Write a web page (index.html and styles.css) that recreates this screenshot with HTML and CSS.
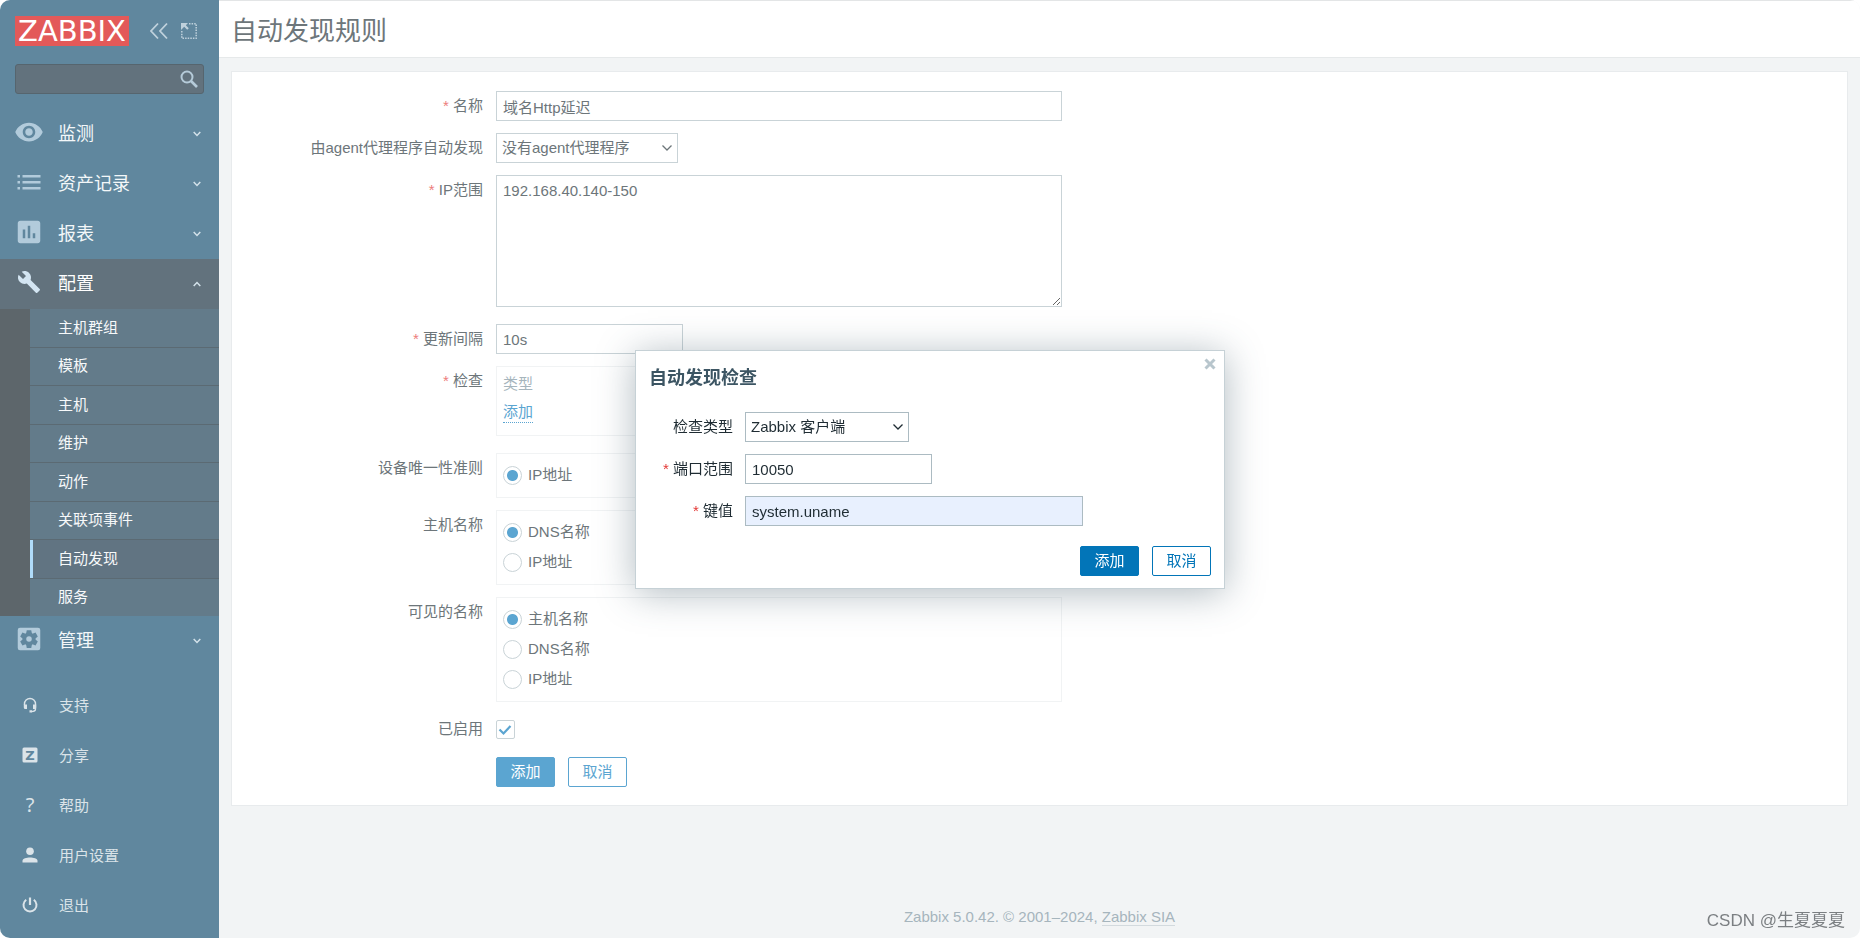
FILE: index.html
```html
<!DOCTYPE html>
<html lang="zh-CN">
<head>
<meta charset="utf-8">
<title>自动发现规则</title>
<link rel="stylesheet" href="styles.css">
</head>
<body>
<div class="shell">
  <aside class="sidebar">
    <div class="brand">
      <a class="logo" href="#">ZABBIX</a>
      <button class="icon-button" type="button" aria-label="收起侧边栏">
        <svg width="20" height="18" viewBox="0 0 20 18" fill="none" stroke="currentColor" stroke-width="1.800"><path d="M9 1.500L2 9l7 7.500M18 1.500L11 9l7 7.500"/></svg>
      </button>
      <button class="icon-button" type="button" aria-label="隐藏侧边栏">
        <svg width="18" height="18" viewBox="0 0 18 18" fill="currentColor"><path d="M9 1.800H16.200V16.200H1.800V9" fill="none" stroke="currentColor" stroke-width="1.500" stroke-dasharray="1.500 1.100"/><path d="M1 1h7L5.800 3.200l3 3-1.600 1.600-3-3L1 8z"/></svg>
      </button>
    </div>
    <form class="search">
      <input class="search-input" type="text" aria-label="搜索">
      <button class="search-button" type="submit" aria-label="搜索">
        <svg width="20" height="20" viewBox="0 0 20 20" fill="none" stroke="currentColor"><circle cx="8" cy="8" r="5.500" stroke-width="2"/><path d="M12 12L18 18" stroke-width="2.600"/></svg>
      </button>
    </form>
    <nav class="menu">
      <a class="menu-item" href="#">
        <svg class="menu-icon" viewBox="0 0 24 24"><path d="M12 4.500C7 4.500 2.730 7.610 1 12c1.730 4.390 6 7.500 11 7.500s9.270-3.110 11-7.500c-1.730-4.390-6-7.500-11-7.500zM12 17c-2.760 0-5-2.240-5-5s2.240-5 5-5 5 2.240 5 5-2.240 5-5 5zm0-8c-1.660 0-3 1.340-3 3s1.340 3 3 3 3-1.340 3-3-1.340-3-3-3z"/></svg>
        <span class="menu-text">监测</span>
        <svg class="chevron" viewBox="0 0 8 6"><path d="M.7 1L4 4.500 7.300 1"/></svg>
      </a>
      <a class="menu-item" href="#">
        <svg class="menu-icon" viewBox="0 0 30 30"><path d="M3.500 8h2.500v2.500H3.500zM8.500 8h18v2.500h-18zM3.500 14h2.500v2.500H3.500zM8.500 14h18v2.500h-18zM3.500 20h2.500v2.500H3.500zM8.500 20h18v2.500h-18z"/></svg>
        <span class="menu-text">资产记录</span>
        <svg class="chevron" viewBox="0 0 8 6"><path d="M.7 1L4 4.500 7.300 1"/></svg>
      </a>
      <a class="menu-item" href="#">
        <svg class="menu-icon" viewBox="0 0 24 24"><path d="M19 3H5c-1.100 0-2 .9-2 2v14c0 1.100.9 2 2 2h14c1.100 0 2-.9 2-2V5c0-1.100-.9-2-2-2zM9 17H7v-7h2v7zm4 0h-2V7h2v10zm4 0h-2v-4h2v4z"/></svg>
        <span class="menu-text">报表</span>
        <svg class="chevron" viewBox="0 0 8 6"><path d="M.7 1L4 4.500 7.300 1"/></svg>
      </a>
      <a class="menu-item menu-item-open" href="#">
        <svg class="menu-icon" viewBox="-3 -3 30 30"><path d="M22.700 19l-9.100-9.100c.9-2.300.4-5-1.500-6.900-2-2-5-2.400-7.400-1.300L9 6 6 9 1.600 4.700C.4 7.100.9 10.100 2.900 12.100c1.900 1.900 4.600 2.400 6.900 1.500l9.100 9.100c.4.4 1 .4 1.400 0l2.300-2.300c.5-.4.5-1.100.1-1.400z"/></svg>
        <span class="menu-text">配置</span>
        <svg class="chevron" viewBox="0 0 8 6"><path d="M.7 5L4 1.500 7.300 5"/></svg>
      </a>
      <div class="submenu">
        <a class="submenu-item" href="#">主机群组</a>
        <a class="submenu-item" href="#">模板</a>
        <a class="submenu-item" href="#">主机</a>
        <a class="submenu-item" href="#">维护</a>
        <a class="submenu-item" href="#">动作</a>
        <a class="submenu-item" href="#">关联项事件</a>
        <a class="submenu-item submenu-item-active" href="#">自动发现</a>
        <a class="submenu-item" href="#">服务</a>
      </div>
      <a class="menu-item" href="#">
        <svg class="menu-icon" viewBox="0 0 24 24"><rect x="3" y="3" width="18" height="18" rx="1.800"/><g class="menu-icon-cut"><circle cx="12" cy="12" r="5.200"/><path d="M10.200 4.900h3.600l.6 3.100H9.600zM10.200 19.100h3.600l.6-3.100H9.600z"/><path transform="rotate(60 12 12)" d="M10.200 4.900h3.600l.6 3.100H9.600zM10.200 19.100h3.600l.6-3.100H9.600z"/><path transform="rotate(120 12 12)" d="M10.200 4.900h3.600l.6 3.100H9.600zM10.200 19.100h3.600l.6-3.100H9.600z"/></g><circle cx="12" cy="12" r="2.200"/></svg>
        <span class="menu-text">管理</span>
        <svg class="chevron" viewBox="0 0 8 6"><path d="M.7 1L4 4.500 7.300 1"/></svg>
      </a>
    </nav>
    <nav class="menu menu-user">
      <a class="menu-item user-item" href="#">
        <svg class="user-icon" viewBox="0 0 16 16"><path d="M2.500 8V7a5.500 5.500 0 0 1 11 0v5q0 2.500-4 2.500" fill="none" stroke="currentColor" stroke-width="1.400"/><path d="M1.800 7.500H5V12H3.300Q1.800 12 1.800 10.500zM14.200 7.500H11V12h1.700q1.500 0 1.500-1.500zM7.500 13.300h2.500v2.200H7.500z"/></svg>
        <span>支持</span>
      </a>
      <a class="menu-item user-item" href="#">
        <svg class="user-icon" viewBox="0 0 16 16"><rect x=".5" y=".5" width="15" height="15" rx="1.500"/><text class="badge-letter" x="8" y="12.600" text-anchor="middle">Z</text></svg>
        <span>分享</span>
      </a>
      <a class="menu-item user-item" href="#">
        <span class="help-mark" aria-hidden="true">?</span>
        <span>帮助</span>
      </a>
      <a class="menu-item user-item" href="#">
        <svg class="user-icon" viewBox="0 0 16 16"><circle cx="8" cy="4.300" r="3.800"/><path d="M.5 15.500v-1.700C.5 11.500 4.500 10.500 8 10.500s7.500 1 7.500 3.300v1.700z"/></svg>
        <span>用户设置</span>
      </a>
      <a class="menu-item user-item" href="#">
        <svg class="user-icon" viewBox="0 0 16 16" fill="none" stroke="currentColor"><path d="M8 .5v7.500" stroke-width="2.200"/><path class="power-ring" d="M4.200 2.800a6.500 6.500 0 1 0 7.600 0" stroke-width="2"/></svg>
        <span>退出</span>
      </a>
    </nav>
  </aside>

  <div class="page">
    <header class="page-header"><h1 class="page-title">自动发现规则</h1></header>
    <main class="card">
      <form class="form">
        <label class="label required" for="name">名称</label>
        <div><input class="input wide" id="name" type="text" value="域名Http延迟"></div>

        <label class="label" for="proxy">由agent代理程序自动发现</label>
        <div><select class="select proxy" id="proxy"><option>没有agent代理程序</option></select></div>

        <label class="label required" for="iprange">IP范围</label>
        <div class="range-field"><textarea class="input wide range" id="iprange">192.168.40.140-150</textarea></div>

        <label class="label required" for="delay">更新间隔</label>
        <div><input class="input short" id="delay" type="text" value="10s"></div>

        <span class="label required" id="checks-label">检查</span>
        <div class="group wide checks" role="group" aria-labelledby="checks-label">
          <table class="checks-table">
            <thead><tr><th>类型</th></tr></thead>
            <tbody><tr><td><a class="dotted-link" href="#">添加</a></td></tr></tbody>
          </table>
        </div>

        <span class="label" id="unique-label">设备唯一性准则</span>
        <div class="group wide" role="radiogroup" aria-labelledby="unique-label">
          <label class="choice"><input class="radio" type="radio" name="unique" checked>IP地址</label>
        </div>

        <span class="label" id="host-label">主机名称</span>
        <div class="group wide" role="radiogroup" aria-labelledby="host-label">
          <label class="choice"><input class="radio" type="radio" name="host" checked>DNS名称</label>
          <label class="choice"><input class="radio" type="radio" name="host">IP地址</label>
        </div>

        <span class="label" id="visible-label">可见的名称</span>
        <div class="group wide" role="radiogroup" aria-labelledby="visible-label">
          <label class="choice"><input class="radio" type="radio" name="visible" checked>主机名称</label>
          <label class="choice"><input class="radio" type="radio" name="visible">DNS名称</label>
          <label class="choice"><input class="radio" type="radio" name="visible">IP地址</label>
        </div>

        <label class="label" for="enabled">已启用</label>
        <div class="check-field"><input class="checkbox" id="enabled" type="checkbox" checked></div>

        <div class="actions">
          <button class="button primary" type="button">添加</button>
          <button class="button" type="button">取消</button>
        </div>
      </form>
    </main>
    <footer class="footer">Zabbix 5.0.42. © 2001–2024, <a class="footer-link" href="#">Zabbix SIA</a></footer>
  </div>
</div>

<div class="dialog" role="dialog" aria-labelledby="dialog-title">
  <div class="dialog-head">
    <h2 class="dialog-title" id="dialog-title">自动发现检查</h2>
    <button class="dialog-close" type="button" aria-label="关闭">
      <svg width="12" height="12" viewBox="0 0 12 12" fill="none" stroke="currentColor" stroke-width="3"><path d="M1.500 1.500l9 9M10.500 1.500l-9 9"/></svg>
    </button>
  </div>
  <form class="dialog-form">
    <label class="label" for="check-type">检查类型</label>
    <div><select class="select check-type" id="check-type"><option>Zabbix 客户端</option></select></div>
    <label class="label required" for="ports">端口范围</label>
    <div><input class="input short" id="ports" type="text" value="10050"></div>
    <label class="label required" for="key">键值</label>
    <div><input class="input key autofilled" id="key" type="text" value="system.uname"></div>
  </form>
  <div class="dialog-actions">
    <button class="button primary" type="button">添加</button>
    <button class="button" type="button">取消</button>
  </div>
</div>
<div class="watermark">CSDN @生夏夏夏</div>
</body>
</html>
```
FILE: styles.css
```css
:root {
  --text: #6d767a;
  --border: #c9d3d7;
  --accent: #5ba5d1;
  --danger: #ed7d7b;
  --side: #60879e;
}

* { box-sizing: border-box; }

body {
  margin: 0;
  background: #fff;
  color: var(--text);
  font: 15px/20px "Liberation Sans", "Noto Sans CJK SC", sans-serif;
}

a { color: inherit; text-decoration: none; }
button, input, select, textarea { font: inherit; color: inherit; margin: 0; }
svg { display: block; flex: none; }

.shell {
  display: flex;
  min-height: 100vh;
  border-radius: 10px;
  overflow: hidden;
  background: #f2f4f5;
}

/* Sidebar */
.sidebar {
  flex: none;
  width: 219px;
  background: var(--side);
  color: #fff;
}

.brand {
  display: flex;
  align-items: center;
  gap: 11px;
  padding: 16px 0 0 15px;
}

.logo {
  width: 114px;
  margin-right: 9px;
  background: #e35959;
  font: 29px/30px "DejaVu Sans", sans-serif;
  text-align: center;
}

.icon-button, .search-button, .dialog-close {
  display: block;
  padding: 0;
  border: 0;
  background: none;
  color: #bfd1dc;
}

.search {
  display: flex;
  align-items: center;
  margin: 18px 15px 15px;
  padding-right: 4px;
  border: 1px solid #56656e;
  border-radius: 3px;
  background: #62727d;
}

.search-input {
  flex: 1;
  min-width: 0;
  height: 28px;
  border: 0;
  background: none;
  outline: none;
}

.search-button { color: #b5cbd9; }

.menu-item {
  display: flex;
  align-items: center;
  height: 50px;
  padding: 0 18px 0 14px;
  font-size: 18px;
  color: #f3f7f9;
}

.menu-icon {
  width: 30px;
  height: 30px;
  margin: 0 14px 4px 0;
  fill: #b2cbdb;
}

.menu-icon-cut { fill: var(--side); }
.menu-text { flex: 1; }

.chevron {
  width: 8px;
  height: 6px;
  fill: none;
  stroke: #d3e2ea;
  stroke-width: 1.500;
}

.menu-item-open { background: #62727d; color: #fff; }
.menu-item-open .menu-icon { fill: #d3e5f2; }

.submenu {
  display: grid;
  min-height: 307px;
  padding-left: 30px;
  background: #5d666b;
}

.submenu-item {
  display: flex;
  align-items: center;
  padding-left: 28px;
  background: #637b8a;
  color: #f7f9fa;
}

.submenu-item + .submenu-item { border-top: 1px solid #5b6a73; }

.submenu-item-active {
  padding-left: 25px;
  background: #617482;
  box-shadow: inset 3px 0 #b0dcfa;
}

.submenu-item.submenu-item-active { padding-left: 28px; }

.menu-user { margin-top: 15px; }

.user-item {
  gap: 21px;
  padding-left: 22px;
  font-size: 15px;
  color: #dbe4e9;
}

.user-icon { width: 16px; height: 16px; margin-bottom: 3px; fill: currentColor; }
.power-ring { fill: none; }
.badge-letter { font: bold 13px "DejaVu Sans", sans-serif; fill: var(--side); }

.help-mark {
  width: 16px;
  margin-bottom: 3px;
  font: 20px/28px "Noto Sans", sans-serif;
  text-align: center;
}

/* Page */
.page {
  flex: 1;
  min-width: 0;
  display: flex;
  flex-direction: column;
}

.page-header {
  padding: 11px 12px 6px;
  border-top: 1px solid #e3e5e6;
  border-bottom: 1px solid #e6e9ea;
  background: #fff;
}

.page-title {
  margin: 0;
  font-size: 26px;
  line-height: 39px;
  font-weight: 400;
}

.card {
  margin: 13px 12px 0;
  padding: 19px 12px 18px;
  border: 1px solid #e8ebed;
  background: #fff;
}

.form {
  display: grid;
  grid-template-columns: 239px 1fr;
  gap: 12px 13px;
}

.form > div, .dialog-form > div { display: flex; }

.label { text-align: right; line-height: 30px; }
.required::before { content: "* "; color: var(--danger); }

.input {
  height: 30px;
  padding: 0 6px;
  border: 1px solid var(--border);
  border-radius: 0;
  background: #fff;
}

.select {
  appearance: none;
  height: 30px;
  padding: 0 20px 0 5px;
  border: 1px solid var(--border);
  border-radius: 0;
  background: #fff url("data:image/svg+xml,%3Csvg xmlns='http://www.w3.org/2000/svg' viewBox='0 0 12 8'%3E%3Cpath d='M1.500 1.500L6 6l4.500-4.500' fill='none' stroke='%236d767a' stroke-width='1.300'/%3E%3C/svg%3E") no-repeat right 4px center / 12px 8px;
}

.wide { width: 566px; }
.short { width: 187px; }
.proxy { width: 182px; }

.range-field { margin-bottom: 5px; }
.range { height: 132px; padding: 6px; line-height: 18px; }

.form > .group {
  display: block;
  padding: 6px 6px 7px;
  border: 1px solid #f1f3f4;
}

.form > .checks { margin-bottom: 5px; padding: 3px 6px 8px; }
.checks-table { border-collapse: collapse; }
.checks-table th { padding: 3px 0; color: #a6b5bd; font-weight: 400; line-height: 22px; text-align: left; }
.checks-table td { padding: 4px 0; line-height: 22px; }
.dotted-link { display: block; line-height: 20px; color: var(--accent); border-bottom: 1px dotted var(--accent); }

.choice { display: flex; align-items: center; gap: 6px; line-height: 30px; }

.radio, .checkbox {
  appearance: none;
  flex: none;
  width: 19px;
  height: 19px;
  border: 1px solid var(--border);
  background: #fff;
}

.radio { border-radius: 50%; }
.radio:checked { background: radial-gradient(circle, var(--accent) 5px, #fff 6px); }

.checkbox { border-radius: 2px; }

.checkbox:checked {
  background: #fff url("data:image/svg+xml,%3Csvg xmlns='http://www.w3.org/2000/svg' viewBox='0 0 17 17'%3E%3Cpath d='M2.500 8.500l4 4 7-7.500' fill='none' stroke='%235ba5d1' stroke-width='2.200'/%3E%3C/svg%3E") center / 17px;
}

.form > .check-field { align-items: center; height: 30px; margin-bottom: 1px; }

.form > .actions { grid-column: 2; gap: 13px; }

.button {
  width: 59px;
  height: 30px;
  padding: 0;
  border: 1px solid var(--accent);
  border-radius: 2px;
  background: #fff;
  color: var(--accent);
}

.button.primary { background: var(--accent); color: #fff; }

.footer {
  margin-top: auto;
  padding-bottom: 11px;
  text-align: center;
  color: #a6b5bd;
}

.footer-link { border-bottom: 1px solid #d3dade; }

/* Dialog */
.dialog {
  --text: #1f2c33;
  --border: #acbbc2;
  --accent: #0275b8;
  --danger: #e33734;
  position: fixed;
  top: 350px;
  left: calc(50% - 295px);
  width: 590px;
  padding: 7px 13px 12px;
  border: 1px solid #c6d1d6;
  background: #fff;
  color: var(--text);
  box-shadow: 0 4px 36px rgba(60, 85, 99, 0.4);
}

.dialog-head { display: flex; justify-content: space-between; }

.dialog-title {
  margin: 7px 0 0;
  font-size: 18px;
  line-height: 26px;
  color: #3c5563;
}

.dialog-close { align-self: flex-start; margin-right: -5px; color: #b8c6cd; }

.dialog-form {
  display: grid;
  grid-template-columns: 84px 1fr;
  gap: 12px;
  margin: 21px 0 20px;
}

.check-type { width: 164px; }
.key { width: 338px; }
.autofilled { background: #e8f0fe; }

.dialog .select {
  background-image: url("data:image/svg+xml,%3Csvg xmlns='http://www.w3.org/2000/svg' viewBox='0 0 12 8'%3E%3Cpath d='M1.500 1.500L6 6l4.500-4.500' fill='none' stroke='%231f2c33' stroke-width='1.300'/%3E%3C/svg%3E");
}

.dialog-actions { display: flex; justify-content: flex-end; gap: 13px; }

.watermark {
  position: fixed;
  right: 15px;
  bottom: 5px;
  font: 17px/24px "Liberation Sans", "Noto Sans CJK SC", sans-serif;
  color: #7b7f82;
}
```
